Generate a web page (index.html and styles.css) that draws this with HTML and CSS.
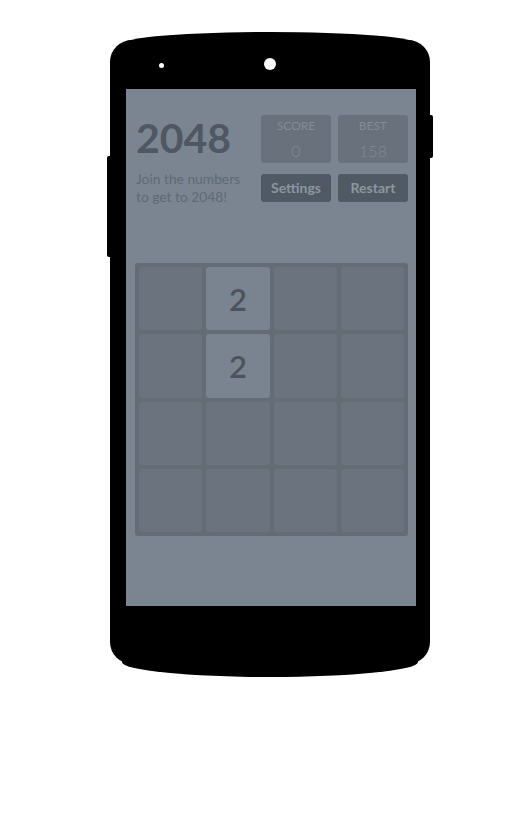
FILE: index.html
```html
<!DOCTYPE html>
<html>
<head>
<meta charset="utf-8">
<link rel="stylesheet" href="styles.css">
</head>
<body>
<div class="phone">
  <svg class="phone-body" width="320" height="645" viewBox="0 0 320 645" aria-hidden="true">
    <rect x="0" y="8" width="320" height="624" rx="22" ry="22" fill="#000"/>
    <path d="M12 12 A148 12 0 0 1 308 12 L308 630 A148 15 0 0 1 12 630 Z" fill="#000"/>
  </svg>
  <span class="btn-sleep"></span>
  <span class="btn-volume"></span>
  <span class="sensor"></span>
  <span class="camera"></span>
  <div class="screen">
    <div class="header">
      <div class="intro">
        <h1 class="title">2048</h1>
        <p class="subtitle">Join the numbers<br>to get to 2048!</p>
      </div>
      <div class="controls">
        <div class="scores">
          <div class="score-box"><span class="label">SCORE</span><span class="value">0</span></div>
          <div class="score-box"><span class="label">BEST</span><span class="value">158</span></div>
        </div>
        <div class="actions">
          <span class="action">Settings</span>
          <span class="action">Restart</span>
        </div>
      </div>
    </div>
    <div class="grid">
      <div class="cell"></div><div class="cell tile">2</div><div class="cell"></div><div class="cell"></div>
      <div class="cell"></div><div class="cell tile">2</div><div class="cell"></div><div class="cell"></div>
      <div class="cell"></div><div class="cell"></div><div class="cell"></div><div class="cell"></div>
      <div class="cell"></div><div class="cell"></div><div class="cell"></div><div class="cell"></div>
    </div>
  </div>
</div>
</body>
</html>
```

FILE: styles.css
```css
html, body {
  margin: 0;
  padding: 0;
  background: #ffffff;
}
body {
  min-height: 819px;
  box-sizing: border-box;
  padding: 32px 0 0 110px;
  font-family: Lato, "Open Sans", sans-serif;
}
.phone {
  position: relative;
  width: 320px;
  height: 645px;
  display: flex;
  flex-direction: column;
  box-sizing: border-box;
  padding: 57px 14px 0 16px;
}
.phone-body {
  position: absolute;
  left: 0;
  top: 0;
  display: block;
}
.btn-sleep {
  position: absolute;
  left: -3px;
  top: 124px;
  width: 3px;
  height: 101px;
  background: #000;
  border-radius: 2px 0 0 2px;
}
.btn-volume {
  position: absolute;
  right: -3px;
  top: 83px;
  width: 3px;
  height: 43px;
  background: #000;
  border-radius: 0 2px 2px 0;
}
.camera {
  position: absolute;
  left: 154px;
  top: 26px;
  width: 12px;
  height: 12px;
  border-radius: 50%;
  background: #fff;
}
.sensor {
  position: absolute;
  left: 49px;
  top: 31px;
  width: 5px;
  height: 5px;
  border-radius: 50%;
  background: #fff;
}
.screen {
  position: relative;
  width: 290px;
  height: 517px;
  background: #7a8591;
  box-sizing: border-box;
  padding: 26px 8px 0 9px;
}
.header {
  display: flex;
  justify-content: space-between;
}
.intro {
  padding-left: 1px;
}
.title {
  margin: 0;
  font-size: 41px;
  line-height: 44px;
  font-weight: 700;
  color: #4e5762;
  margin-top: 1px;
}
.subtitle {
  margin: 10px 0 0;
  font-size: 13.8px;
  line-height: 18px;
  color: #5f6974;
}
.controls {
  width: 147px;
  display: flex;
  flex-direction: column;
  gap: 11px;
}
.scores, .actions {
  display: flex;
  justify-content: space-between;
}
.score-box {
  width: 70px;
  height: 48px;
  border-radius: 3px;
  background: #68717c;
  display: flex;
  flex-direction: column;
  align-items: center;
  color: #828c97;
}
.label {
  font-size: 12px;
  line-height: 13px;
  margin-top: 4px;
}
.value {
  font-size: 16px;
  line-height: 20px;
  margin-top: 9px;
  font-weight: 300;
}
.action {
  width: 70px;
  height: 28px;
  border-radius: 3px;
  background: #505a65;
  color: #8c96a0;
  font-weight: 700;
  font-size: 14px;
  line-height: 28px;
  text-align: center;
}
.grid {
  margin-top: 57px;
  width: 273px;
  height: 273px;
  box-sizing: border-box;
  padding: 4px;
  background: #646c76;
  border-radius: 3px;
  display: grid;
  grid-template-columns: repeat(4, 1fr);
  grid-template-rows: repeat(4, 1fr);
  gap: 4px;
}
.cell {
  background: #6b737e;
  border-radius: 3px;
}
.tile {
  background: #7a8490;
  color: #4b535d;
  font-size: 31px;
  font-weight: 600;
  display: flex;
  align-items: center;
  justify-content: center;
}
```
